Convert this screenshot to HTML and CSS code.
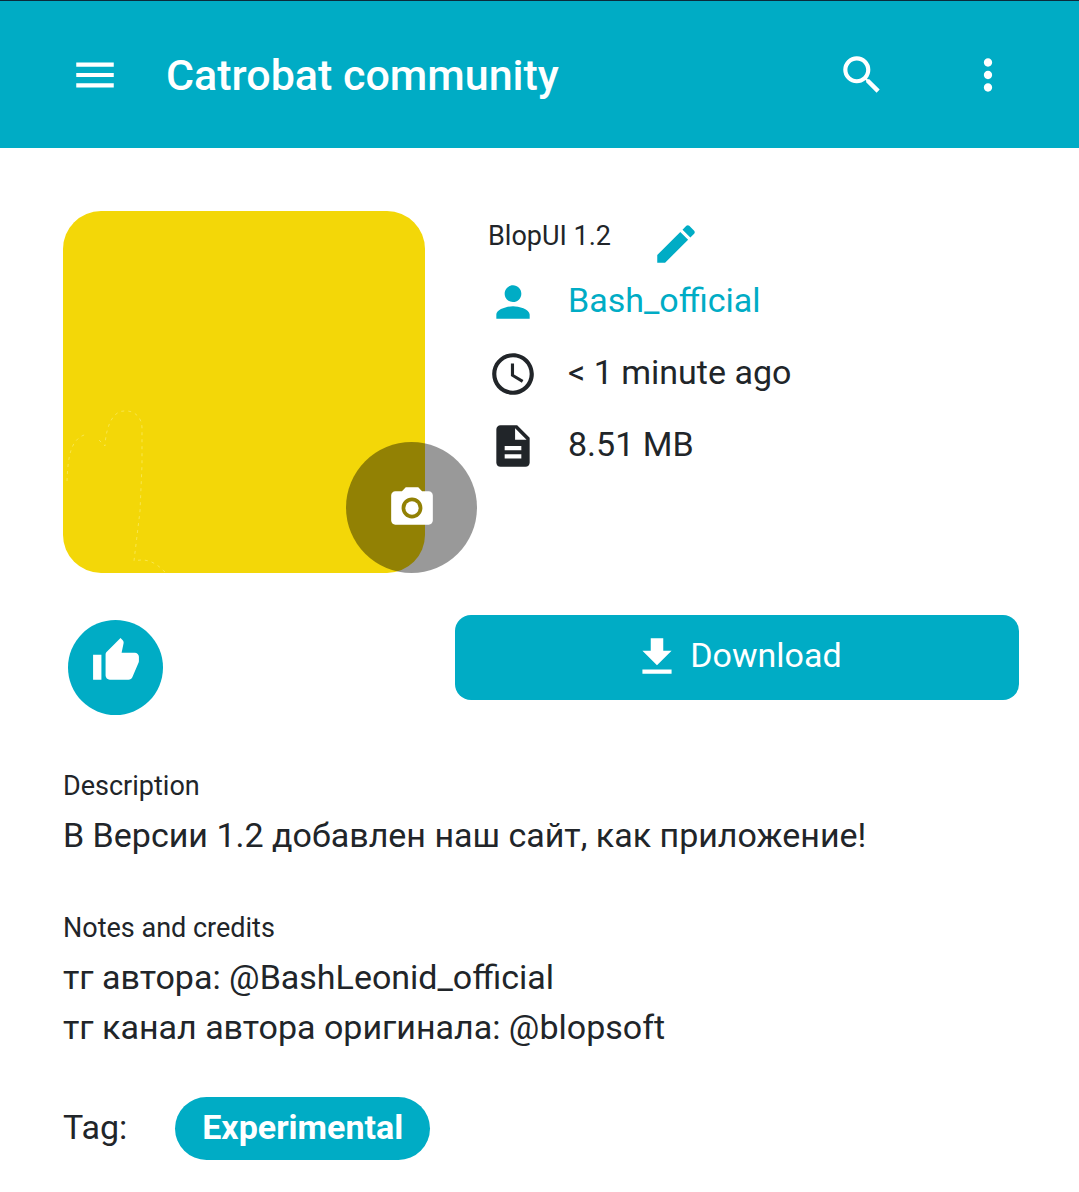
FILE: index.html
```html
<!DOCTYPE html>
<html lang="en">
<head>
<meta charset="utf-8">
<meta name="viewport" content="width=device-width, initial-scale=1">
<title>BlopUI 1.2 - Catrobat community</title>
<link rel="stylesheet" href="styles.css">
</head>
<body>
<header class="app-bar">
  <button class="icon-button" type="button" aria-label="Menu">
    <svg class="icon" viewBox="0 0 24 24"><path d="M3 18h18v-2H3v2zm0-5h18v-2H3v2zm0-7v2h18V6H3z"/></svg>
  </button>
  <a class="app-title" href="#">Catrobat community</a>
  <div class="app-actions">
    <button class="icon-button" type="button" aria-label="Search">
      <svg class="icon" viewBox="0 0 24 24"><path d="M15.500 14h-.79l-.28-.27A6.470 6.470 0 0 0 16 9.500 6.500 6.500 0 1 0 9.500 16c1.610 0 3.090-.59 4.230-1.570l.27.28v.79l5 4.990L20.490 19l-4.990-5zm-6 0C7.010 14 5 11.990 5 9.500S7.010 5 9.500 5 14 7.010 14 9.500 11.990 14 9.500 14z"/></svg>
    </button>
    <button class="icon-button" type="button" aria-label="More options">
      <svg class="icon" viewBox="0 0 24 24"><path d="M12 8c1.100 0 2-.9 2-2s-.9-2-2-2-2 .9-2 2 .9 2 2 2zm0 2c-1.100 0-2 .9-2 2s.9 2 2 2 2-.9 2-2-.9-2-2-2zm0 6c-1.100 0-2 .9-2 2s.9 2 2 2 2-.9 2-2-.9-2-2-2z"/></svg>
    </button>
  </div>
</header>

<main class="project">
  <section class="summary">
    <div class="cover">
      <svg class="cover-art" viewBox="0 0 362 362" role="img" aria-label="Project image">
        <rect width="362" height="362" fill="#f3d708"/>
        <path class="cover-outline" d="M4 270C5 250 6 226 25 223M36 229L42 235C43 215 50 200 61 200C72 199 79 207 79 217L79 254L77 300L71 350C84 347 92 351 102 361"/>
      </svg>
      <button class="cover-edit" type="button" aria-label="Change project image">
        <svg class="icon" viewBox="0 0 24 24"><circle cx="12" cy="12" r="3.200"/><path d="M9 2L7.170 4H4c-1.100 0-2 .9-2 2v12c0 1.100.9 2 2 2h16c1.100 0 2-.9 2-2V6c0-1.100-.9-2-2-2h-3.170L15 2H9zm3 15c-2.760 0-5-2.240-5-5s2.240-5 5-5 5 2.240 5 5-2.240 5-5 5z"/></svg>
      </button>
    </div>
    <div class="facts">
      <div class="name-row">
        <h1 class="heading">BlopUI 1.2</h1>
        <button class="icon-button edit-button" type="button" aria-label="Edit name">
          <svg class="icon" viewBox="0 0 24 24"><path d="M3 17.250V21h3.750L17.810 9.940l-3.750-3.750L3 17.250zM20.710 7.040c.39-.39.39-1.020 0-1.410l-2.340-2.340c-.39-.39-1.020-.39-1.410 0l-1.830 1.830 3.750 3.750 1.830-1.830z"/></svg>
        </button>
      </div>
      <ul class="fact-list">
        <li class="fact accent">
          <svg class="icon" viewBox="0 0 24 24"><path d="M12 12c2.210 0 4-1.790 4-4s-1.790-4-4-4-4 1.790-4 4 1.790 4 4 4zm0 2c-2.670 0-8 1.340-8 4v2h16v-2c0-2.660-5.330-4-8-4z"/></svg>
          <a href="#">Bash_official</a>
        </li>
        <li class="fact">
          <svg class="icon" viewBox="0 0 24 24"><path d="M11.990 2C6.470 2 2 6.480 2 12s4.470 10 9.990 10C17.520 22 22 17.520 22 12S17.520 2 11.990 2zM12 20c-4.420 0-8-3.580-8-8s3.580-8 8-8 8 3.580 8 8-3.580 8-8 8zm.5-13H11v6l5.250 3.150.75-1.230-4.500-2.670z"/></svg>
          <span>&lt; 1 minute ago</span>
        </li>
        <li class="fact">
          <svg class="icon" viewBox="0 0 24 24"><path d="M14 2H6c-1.100 0-1.990.9-1.990 2L4 20c0 1.100.89 2 1.990 2H18c1.100 0 2-.9 2-2V8l-6-6zm2 16H8v-2h8v2zm0-4H8v-2h8v2zm-3-5V3.500L18.500 9H13z"/></svg>
          <span>8.51 MB</span>
        </li>
      </ul>
    </div>
  </section>

  <section class="actions">
    <button class="like-button" type="button" aria-label="Like">
      <svg class="icon" viewBox="0 0 24 24"><path d="M1 21h4V9H1v12zm22-11c0-1.100-.9-2-2-2h-6.310l.95-4.570.03-.32c0-.41-.17-.79-.44-1.060L14.170 1 7.590 7.590C7.220 7.950 7 8.450 7 9v10c0 1.100.9 2 2 2h9c.83 0 1.540-.5 1.840-1.220l3.020-7.050c.09-.23.14-.47.14-.73v-2z"/></svg>
    </button>
    <button class="download-button" type="button">
      <svg class="icon" viewBox="0 0 24 24"><path d="M19 9h-4V3H9v6H5l7 7 7-7zM5 18v2h14v-2H5z"/></svg>
      <span>Download</span>
    </button>
  </section>

  <section class="text-block">
    <h2 class="heading">Description</h2>
    <p lang="ru">В Версии 1.2 добавлен наш сайт, как приложение!</p>
  </section>

  <section class="text-block">
    <h2 class="heading">Notes and credits</h2>
    <p lang="ru">тг автора: @BashLeonid_official<br>тг канал автора оригинала: @blopsoft</p>
  </section>

  <section class="tags">
    <span>Tag:</span>
    <a class="tag" href="#">Experimental</a>
  </section>
</main>
</body>
</html>
```
FILE: styles.css
```css
:root {
  --accent: #00acc5;
  --ink: #212529;
}

* {
  box-sizing: border-box;
}

body {
  margin: 0;
  background: #fff;
  color: var(--ink);
  font: 400 34px/50px Roboto, "Liberation Sans", sans-serif;
}

h1, h2, p, ul {
  margin: 0;
  padding: 0;
}

a {
  color: inherit;
  text-decoration: none;
}

button {
  margin: 0;
  padding: 0;
  border: 0;
  background: none;
  color: inherit;
  font: inherit;
  cursor: pointer;
}

.icon {
  display: block;
  flex: none;
  width: 50px;
  height: 50px;
  fill: currentColor;
}

.icon-button {
  flex: none;
}

.app-bar {
  display: flex;
  align-items: center;
  padding: 49px 66px 48px 70px;
  border-top: 1px solid #0b2b3c;
  background: var(--accent);
  color: #fff;
}

.app-title {
  margin-left: 46px;
  font-size: 43px;
  font-weight: 500;
  line-height: 48px;
}

.app-actions {
  display: flex;
  gap: 76px;
  margin-left: auto;
}

.project {
  padding: 63px 60px 31px 63px;
}

.summary {
  display: flex;
  gap: 63px;
}

.cover {
  position: relative;
  flex: none;
  width: 362px;
}

.cover-art {
  display: block;
  width: 100%;
  border-radius: 38px;
}

.cover-outline {
  fill: none;
  stroke: #f8e64e;
  stroke-width: 1;
  stroke-dasharray: 3 4;
}

.cover-edit {
  position: absolute;
  right: -52px;
  bottom: 0;
  display: grid;
  place-items: center;
  width: 131px;
  height: 131px;
  border-radius: 50%;
  background: rgba(0, 0, 0, 0.4);
  color: #fff;
}

.facts {
  flex: 1;
}

.heading {
  font-size: 27px;
  font-weight: 400;
  line-height: 47px;
}

.name-row {
  display: flex;
  gap: 40px;
}

.name-row .heading {
  line-height: 50px;
}

.edit-button {
  padding-top: 8px;
  color: var(--accent);
}

.fact-list {
  display: grid;
  gap: 22px;
  margin-top: 8px;
  list-style: none;
}

.fact {
  display: flex;
  align-items: flex-start;
  gap: 30px;
  line-height: 46px;
}

.accent {
  color: var(--accent);
}

.actions {
  display: flex;
  justify-content: space-between;
  margin-top: 42px;
}

.like-button {
  display: grid;
  place-items: center;
  width: 95px;
  height: 95px;
  margin: 5px 5px 3px;
  padding-bottom: 14px;
  border-radius: 50%;
  background: var(--accent);
  color: #fff;
}

.download-button {
  display: flex;
  align-items: flex-start;
  justify-content: center;
  gap: 8px;
  width: 59%;
  height: 85px;
  padding-top: 17px;
  border-radius: 16px;
  background: var(--accent);
  color: #fff;
  line-height: 46px;
}

.text-block {
  margin-top: 45px;
}

.tags {
  display: flex;
  align-items: baseline;
  gap: 48px;
  margin-top: 45px;
}

.tag {
  padding: 5px 27px 8px;
  border-radius: 32px;
  background: var(--accent);
  color: #fff;
  font-weight: 700;
}
```
